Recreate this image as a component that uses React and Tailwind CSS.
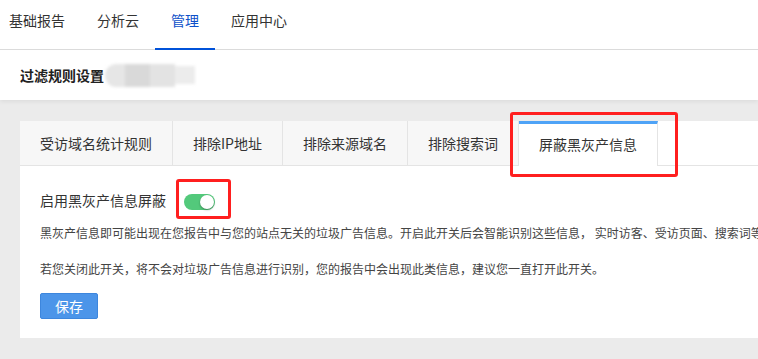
export default function App() {
  const navItems = ['基础报告', '分析云', '管理', '应用中心']
  const tabs = ['受访域名统计规则', '排除IP地址', '排除来源域名', '排除搜索词', '屏蔽黑灰产信息']

  return (
    <div
      className="relative w-[758px] h-[359px] overflow-hidden bg-[#ebebeb] text-[#333]"
      style={{ fontFamily: '"Noto Sans CJK SC", "Noto Sans", sans-serif' }}
    >
      {/* Top nav */}
      <div className="flex h-[50px] bg-white border-b border-[#dcdcdc]">
        {navItems.map((item, i) => (
          <div
            key={item}
            className={`relative h-[49px] pt-[11px] text-[14px] leading-[18px] ${
              i === 0 ? 'pl-[9px] pr-4' : 'px-4'
            } ${item === '管理' ? 'text-[#0d50c9]' : 'text-[#333]'}`}
          >
            {item}
            {item === '管理' && (
              <div className="absolute left-0 right-0 bottom-[-1px] h-[2px] bg-[#0052d9]" />
            )}
          </div>
        ))}
      </div>

      {/* Page title */}
      <div className="flex items-center h-[50px] bg-white pl-5 shadow-[0_2px_4px_rgba(0,0,0,0.06)]">
        <span className="text-[14px] font-semibold text-[#222]">过滤规则设置</span>
        <div className="ml-[1px] flex h-[23px] w-[90px] blur-[1.5px]">
          <div className="w-[20px] h-full rounded-l-full bg-[#e6e6e6]" />
          <div className="w-[25px] h-full bg-[#d9d9d9]" />
          <div className="w-[25px] h-full bg-[#e3e3e3]" />
          <div className="w-[20px] h-[80%] mt-[2px] bg-[#ececec]" />
        </div>
      </div>

      {/* Card */}
      <div className="pl-5 pt-[21px]">
        <div className="w-[800px] bg-white">
          <div className="flex h-[45px] border-b border-[#e4e4e4]">
            {tabs.map((t, i) => {
              const active = i === tabs.length - 1
              return (
                <div
                  key={t}
                  className={`px-5 border-r border-[#e4e4e4] text-[14px] leading-[20px] ${
                    active
                      ? 'bg-white border-t-[3px] border-t-[#4ea3f7] h-[45px] pt-[10px] mb-[-1px]'
                      : 'bg-[#f7f7f7] pt-[12px]'
                  }`}
                >
                  {t}
                </div>
              )
            })}
          </div>

          <div className="pl-5 pt-6 pb-[19px]">
            <div className="flex items-start">
              <span className="text-[14px] leading-[20px] text-[#333]">启用黑灰产信息屏蔽</span>
              <div className="ml-[18px] mt-[4px] relative w-[31px] h-[16px] rounded-full bg-[#53c97b]">
                <div className="absolute right-[1px] top-[1px] w-[14px] h-[14px] rounded-full bg-white shadow-[0_1px_2px_rgba(0,0,0,0.35)]" />
              </div>
            </div>
            <p className="mt-[14px] text-[12px] leading-[18px] text-[#444] whitespace-nowrap">
              黑灰产信息即可能出现在您报告中与您的站点无关的垃圾广告信息。开启此开关后会智能识别这些信息， 实时访客、受访页面、搜索词等报告中将不再展示这些信息。
            </p>
            <p className="mt-[18px] text-[12px] leading-[18px] text-[#444] whitespace-nowrap">
              若您关闭此开关，将不会对垃圾广告信息进行识别，您的报告中会出现此类信息，建议您一直打开此开关。
            </p>
            <button className="mt-[15px] w-[58px] h-[26px] rounded-[2px] border border-[#3d86dd] bg-[#4c95e9] text-white text-[14px] leading-[24px]">
              保存
            </button>
          </div>
        </div>
      </div>

      {/* Annotation boxes */}
      <div className="absolute left-[510px] top-[112px] w-[168px] h-[65px] border-[3px] border-[#ff1f1f] rounded-[3px]" />
      <div className="absolute left-[176px] top-[179px] w-[55px] h-[40px] border-[3px] border-[#ff1f1f] rounded-[3px]" />
    </div>
  )
}
